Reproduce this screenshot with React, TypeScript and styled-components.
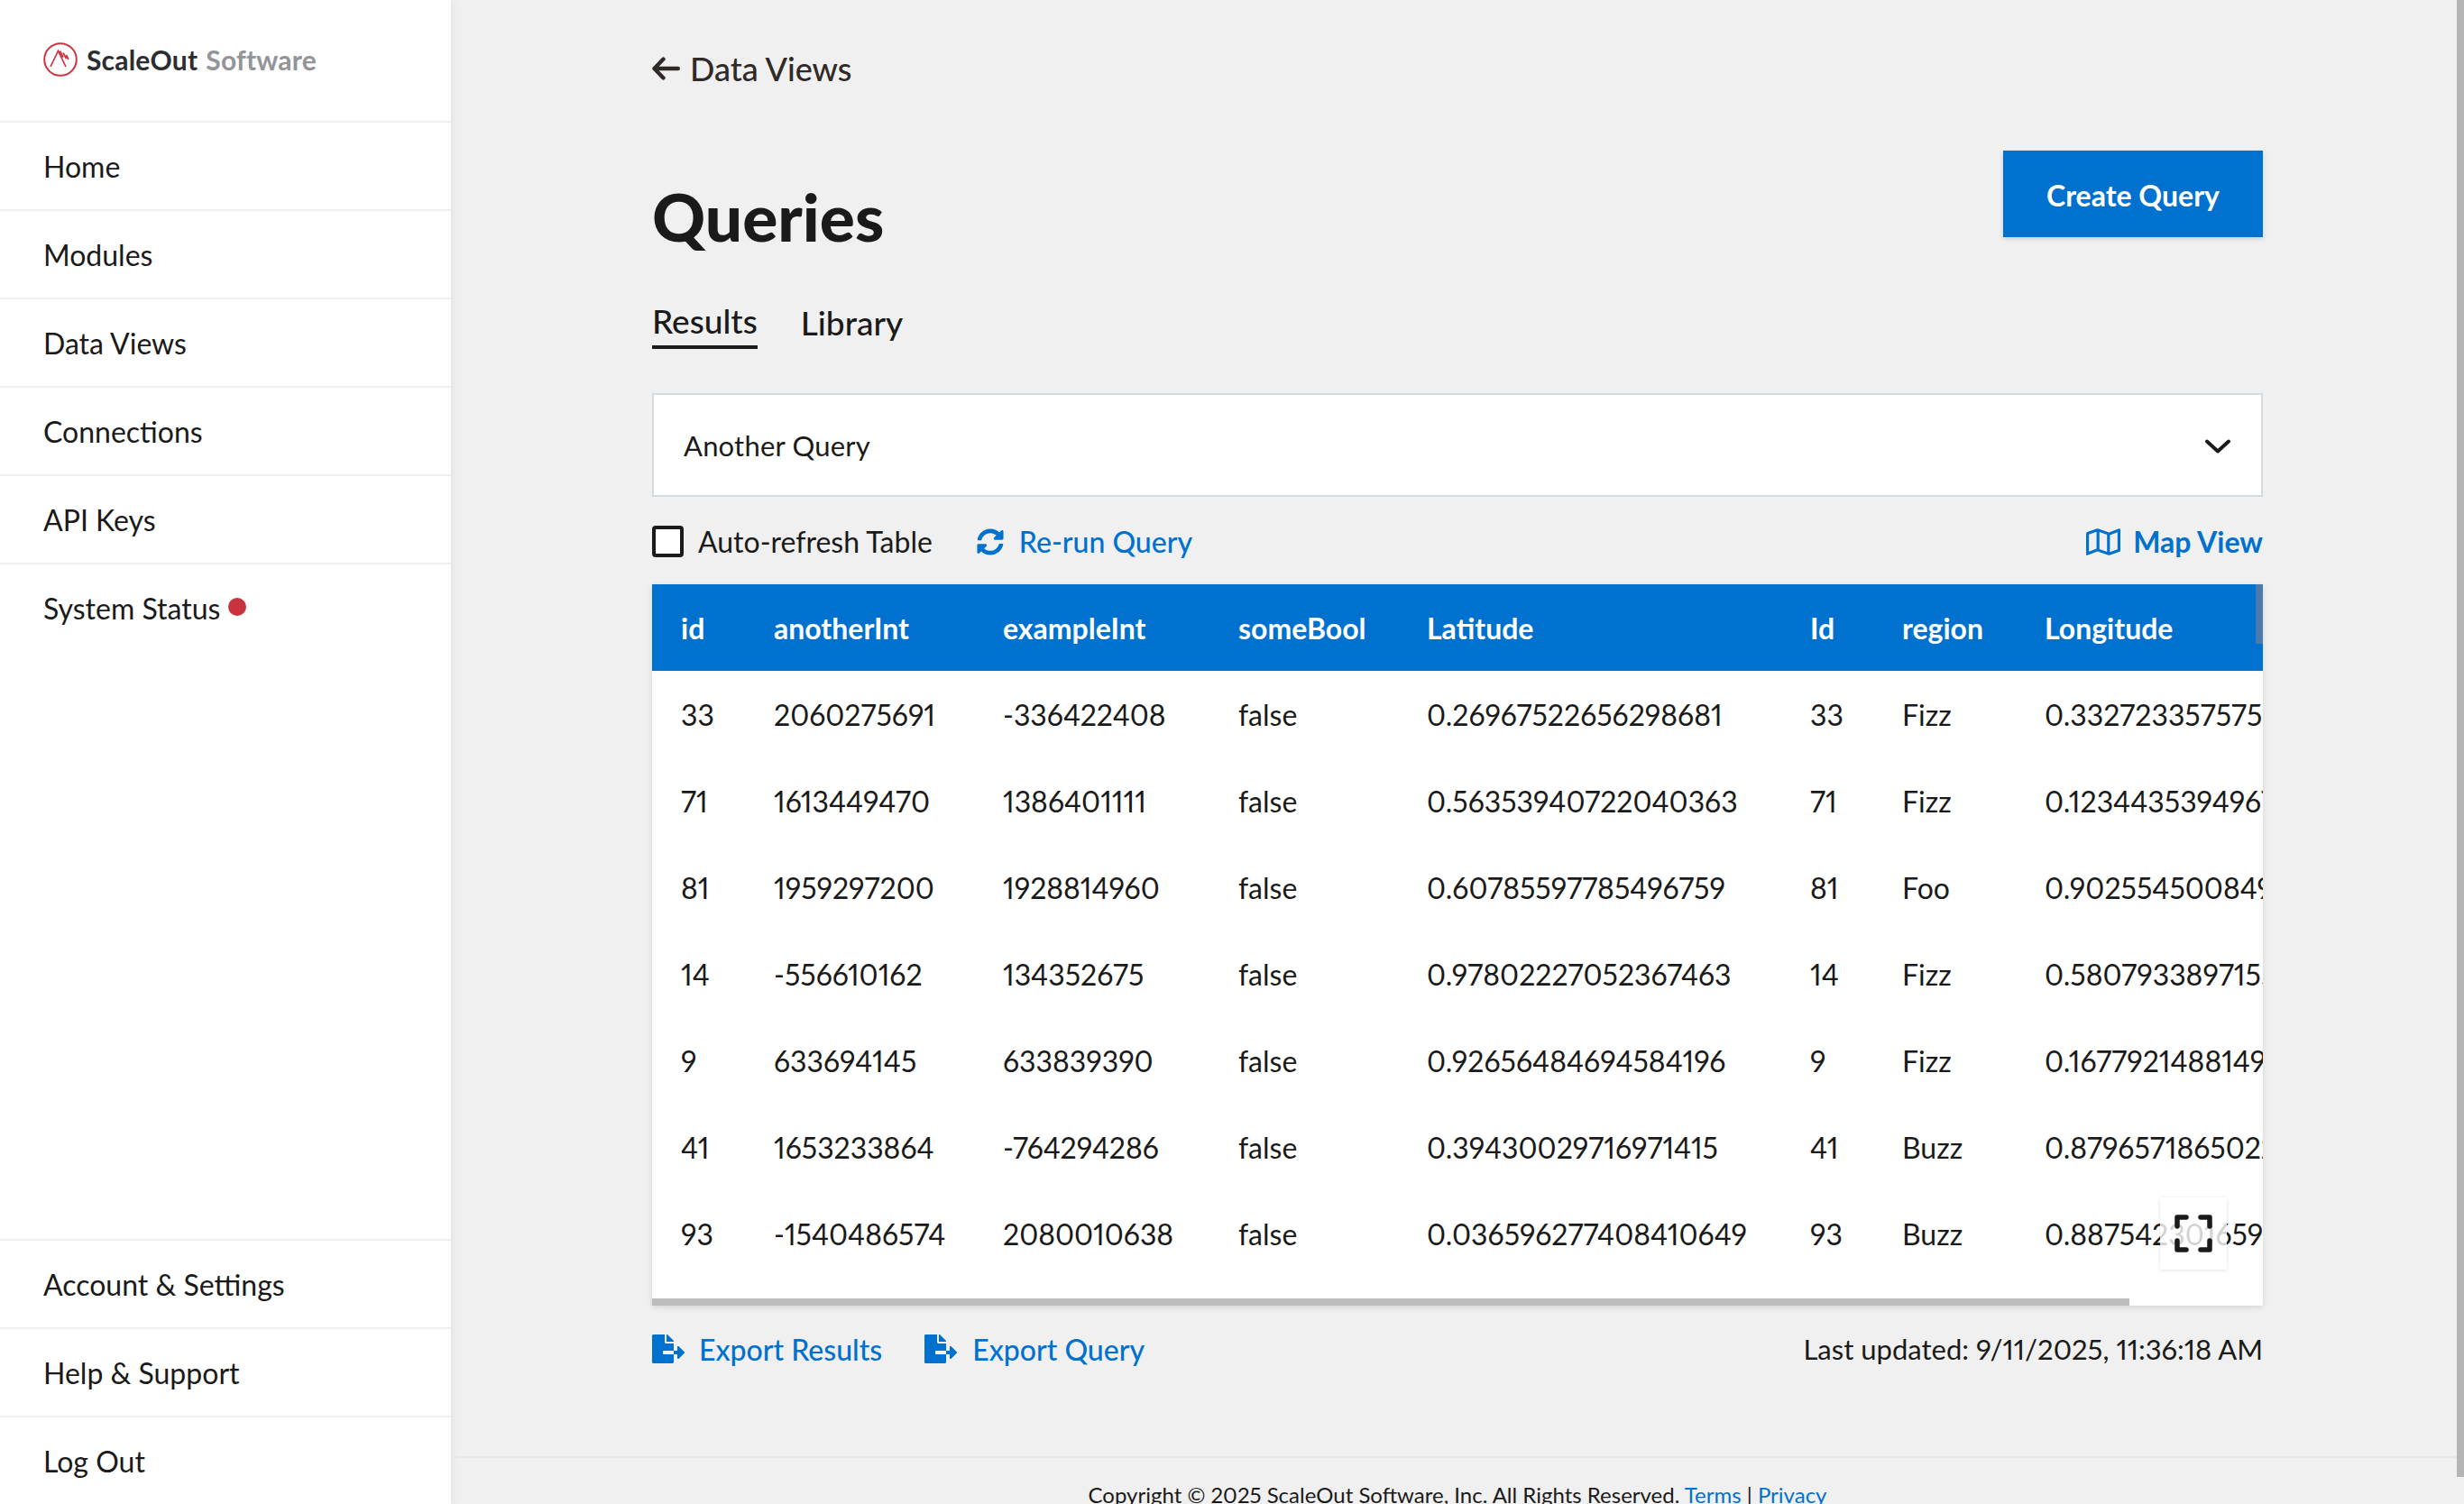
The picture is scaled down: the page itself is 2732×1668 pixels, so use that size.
import React from 'react';
import styled, { createGlobalStyle } from 'styled-components';
import { FaFileExport, FaRegMap, FaSyncAlt } from 'react-icons/fa';

const GlobalStyle = createGlobalStyle`
    html, body {
        margin: 0;
        padding: 0;
        height: 1668px;
        overflow: hidden;
        background: #f0f0f0;
        font-family: Lato, "Liberation Sans", sans-serif;
        font-variant-numeric: proportional-nums;
        color: #1a1a1a;
    }
    * { box-sizing: border-box; }
`;

const Shell = styled.div`
    display: flex;
    position: relative;
    height: 1668px;
    overflow: hidden;
`;

const Sidebar = styled.aside`
    width: 500px;
    flex: none;
    display: flex;
    flex-direction: column;
    justify-content: space-between;
    background: #fff;
    box-shadow: 2px 0 10px rgba(0, 0, 0, 0.06);
`;

const Brand = styled.div`
    height: 134px;
    display: flex;
    align-items: center;
    padding-left: 48px;
    padding-bottom: 2px;
    gap: 10px;
    font-size: 30px;
    font-weight: 700;
    letter-spacing: 0.2px;
    color: #2b2d30;
`;

const BrandLight = styled.span`
    color: #929497;
    margin-left: 9px;
`;

const NavList = styled.nav`
    display: flex;
    flex-direction: column;
`;

const NavItem = styled.a`
    height: 98px;
    display: flex;
    align-items: center;
    gap: 9px;
    padding-left: 48px;
    border-top: 2px solid #f0f0f0;
    font-size: 32px;
    color: #1a1a1a;
`;

const StatusDot = styled.span`
    width: 20px;
    height: 20px;
    border-radius: 50%;
    background: #c9323e;
    margin-bottom: 2px;
`;

const Main = styled.main`
    flex: 1;
    display: flex;
    flex-direction: column;
    min-width: 0;
`;

const Content = styled.div`
    padding: 0 223px;
`;

const BackLink = styled.a`
    height: 154px;
    display: flex;
    align-items: center;
    padding-bottom: 2px;
    gap: 11px;
    font-size: 36px;
    font-weight: 500;
    color: #2f2a27;
`;

const HeadRow = styled.div`
    display: flex;
    justify-content: space-between;
    align-items: flex-start;
    height: 147px;
    padding-top: 13px;
`;

const Title = styled.h1`
    margin: 31px 0 0;
    font-size: 73px;
    line-height: 84px;
    font-weight: 900;
    color: #1a1a1a;
`;

const CreateButton = styled.button`
    width: 288px;
    height: 96px;
    border: 0;
    padding-top: 4px;
    background: #0071ce;
    color: #fff;
    font-family: inherit;
    font-size: 32px;
    font-weight: 700;
    box-shadow: 0 2px 5px rgba(0, 0, 0, 0.15);
`;

const Tabs = styled.div`
    display: flex;
    gap: 48px;
    height: 135px;
`;

const Tab = styled.a<{ $active?: boolean }>`
    height: 86px;
    display: flex;
    align-items: flex-end;
    padding-bottom: ${(p) => (p.$active ? '5px' : '3px')};
    font-size: 37px;
    line-height: 44px;
    font-weight: 500;
    color: #1a1a1a;
    border-bottom: 4px solid ${(p) => (p.$active ? '#1a1a1a' : 'transparent')};
`;

const Select = styled.div`
    height: 115px;
    display: flex;
    align-items: center;
    justify-content: space-between;
    padding: 0 33px;
    background: #fff;
    border: 2px solid #d5dae0;
    font-size: 31px;
    letter-spacing: 0.2px;
`;

const ChevronWrap = styled.span`
    display: flex;
    margin: 2px 1px 0 0;
`;

const Toolbar = styled.div`
    height: 97px;
    display: flex;
    align-items: center;
    padding-top: 2px;
    font-size: 32px;
`;

const CheckBox = styled.span`
    width: 35px;
    height: 35px;
    border: 4px solid #1a1a1a;
    border-radius: 4px;
    background: #fff;
    margin-right: 16px;
`;

const ActionLink = styled.a<{ $gap: number; $left?: number; $strong?: boolean }>`
    display: inline-flex;
    align-items: center;
    gap: ${(p) => p.$gap}px;
    margin-left: ${(p) => p.$left ?? 0}px;
    color: #0071ce;
    font-size: 32px;
    font-weight: ${(p) => (p.$strong ? 700 : 500)};
`;

const Spacer = styled.span`
    flex: 1;
`;

const TableCard = styled.div`
    position: relative;
    height: 800px;
    background: #fff;
    overflow: hidden;
    box-shadow: 0 2px 6px rgba(0, 0, 0, 0.12);
`;

const DataTable = styled.table`
    width: 2160px;
    table-layout: fixed;
    border-collapse: collapse;
`;

const Column = styled.col<{ $w: number }>`
    width: ${(p) => p.$w}px;
`;

const HeadCell = styled.th`
    height: 96px;
    padding: 0 0 0 32px;
    background: #0071ce;
    color: #fff;
    text-align: left;
    font-size: 32px;
    font-weight: 700;
`;

const Cell = styled.td`
    height: 96px;
    padding: 0 0 0 32px;
    font-size: 32px;
    white-space: nowrap;
    overflow: hidden;
`;

const HeaderThumb = styled.span`
    position: absolute;
    top: 0;
    right: 0;
    width: 8px;
    height: 66px;
    background: #4a7bab;
`;

const HorizontalThumb = styled.span`
    position: absolute;
    left: 0;
    bottom: 0;
    width: 1638px;
    height: 8px;
    background: #bdbdbd;
`;

const FullscreenButton = styled.button`
    position: absolute;
    left: 1672px;
    top: 680px;
    width: 74px;
    height: 80px;
    padding: 0;
    border: 0;
    display: flex;
    align-items: center;
    justify-content: center;
    background: rgba(255, 255, 255, 0.8);
    box-shadow: 0 1px 4px rgba(0, 0, 0, 0.12);
`;

const FooterActions = styled.div`
    height: 167px;
    padding-bottom: 71px;
    display: flex;
    align-items: center;
`;

const Updated = styled.span`
    font-size: 31px;
    color: #1a1a1a;
`;

const Footer = styled.footer`
    border-top: 2px solid #e6e6ec;
    padding-top: 26px;
    text-align: center;
    font-size: 24px;
    line-height: 30px;
    white-space: nowrap;
`;

const FooterLink = styled.a`
    color: #0071ce;
`;

const PageScrollbar = styled.span`
    position: absolute;
    top: 0;
    right: 0;
    width: 8px;
    height: 1638px;
    background: #b5b5b5;
`;

const columns = [103, 254, 261, 209, 425, 102, 158, 648];
const headers = ['id', 'anotherInt', 'exampleInt', 'someBool', 'Latitude', 'Id', 'region', 'Longitude'];
const rows = [
    ['33', '2060275691', '-336422408', 'false', '0.26967522656298681', '33', 'Fizz', '0.33272335757560214'],
    ['71', '1613449470', '1386401111', 'false', '0.56353940722040363', '71', 'Fizz', '0.12344353949671032'],
    ['81', '1959297200', '1928814960', 'false', '0.60785597785496759', '81', 'Foo', '0.90255450084952110'],
    ['14', '-556610162', '134352675', 'false', '0.97802227052367463', '14', 'Fizz', '0.58079338971558120'],
    ['9', '633694145', '633839390', 'false', '0.92656484694584196', '9', 'Fizz', '0.16779214881499320'],
    ['41', '1653233864', '-764294286', 'false', '0.39430029716971415', '41', 'Buzz', '0.87965718650221430'],
    ['93', '-1540486574', '2080010638', 'false', '0.036596277408410649', '93', 'Buzz', '0.88754230165959120'],
];

const Logo = () => (
    <svg width="38" height="38" viewBox="0 0 38 38" fill="none" stroke="#cc3340">
        <circle cx="19" cy="19" r="17.8" strokeWidth="2" />
        <path d="M8 27 L16.5 9.5 L25 27 M18.5 9.5 L22 16.5 M22 11.5 L25.5 18 M25.5 14 L28 19" strokeWidth="1.7" />
    </svg>
);

const BackArrow = () => (
    <svg width="31" height="26" viewBox="0 0 31 26" fill="none" stroke="#2f2a27" strokeWidth="4.4" strokeLinecap="round" strokeLinejoin="round">
        <path d="M12.5 2.5 L2.5 13 L12.5 23.5 M2.5 13 H28.8" />
    </svg>
);

const Chevron = () => (
    <svg width="28" height="16" viewBox="0 0 28 16" fill="none" stroke="#1a1a1a" strokeWidth="4" strokeLinecap="round" strokeLinejoin="round">
        <path d="M2 2.5 L14 13.5 L26 2.5" />
    </svg>
);

const ExpandIcon = () => (
    <svg width="42" height="42" viewBox="0 0 42 42" fill="none" stroke="#1a1a1a" strokeWidth="5.5" strokeLinecap="round" strokeLinejoin="round">
        <path d="M13 3 H3 V13 M29 3 H39 V13 M13 39 H3 V29 M29 39 H39 V29" />
    </svg>
);

export default function App() {
    return (
        <Shell>
            <GlobalStyle />
            <Sidebar>
                <div>
                    <Brand>
                        <Logo />
                        <span>ScaleOut<BrandLight>Software</BrandLight></span>
                    </Brand>
                    <NavList>
                        <NavItem>Home</NavItem>
                        <NavItem>Modules</NavItem>
                        <NavItem>Data Views</NavItem>
                        <NavItem>Connections</NavItem>
                        <NavItem>API Keys</NavItem>
                        <NavItem>System Status<StatusDot /></NavItem>
                    </NavList>
                </div>
                <NavList>
                    <NavItem>Account &amp; Settings</NavItem>
                    <NavItem>Help &amp; Support</NavItem>
                    <NavItem>Log Out</NavItem>
                </NavList>
            </Sidebar>
            <Main>
                <Content>
                    <BackLink><BackArrow />Data Views</BackLink>
                    <HeadRow>
                        <Title>Queries</Title>
                        <CreateButton>Create Query</CreateButton>
                    </HeadRow>
                    <Tabs>
                        <Tab $active>Results</Tab>
                        <Tab>Library</Tab>
                    </Tabs>
                    <Select>Another Query<ChevronWrap><Chevron /></ChevronWrap></Select>
                    <Toolbar>
                        <CheckBox />
                        Auto-refresh Table
                        <ActionLink $gap={17} $left={49}><FaSyncAlt size={30} />Re-run Query</ActionLink>
                        <Spacer />
                        <ActionLink $gap={14} $strong><FaRegMap size={38} />Map View</ActionLink>
                    </Toolbar>
                    <TableCard>
                        <DataTable>
                            <colgroup>
                                {columns.map((w, i) => <Column key={i} $w={w} />)}
                            </colgroup>
                            <thead>
                                <tr>{headers.map((h) => <HeadCell key={h}>{h}</HeadCell>)}</tr>
                            </thead>
                            <tbody>
                                {rows.map((row) => (
                                    <tr key={row[0]}>
                                        {row.map((v, i) => <Cell key={i}>{v}</Cell>)}
                                    </tr>
                                ))}
                            </tbody>
                        </DataTable>
                        <HeaderThumb />
                        <HorizontalThumb />
                        <FullscreenButton><ExpandIcon /></FullscreenButton>
                    </TableCard>
                    <FooterActions>
                        <ActionLink $gap={16}><FaFileExport size={36} />Export Results</ActionLink>
                        <ActionLink $gap={17} $left={47}><FaFileExport size={36} />Export Query</ActionLink>
                        <Spacer />
                        <Updated>Last updated: 9/11/2025, 11:36:18 AM</Updated>
                    </FooterActions>
                </Content>
                <Footer>
                    Copyright © 2025 ScaleOut Software, Inc. All Rights Reserved. <FooterLink>Terms</FooterLink> | <FooterLink>Privacy</FooterLink>
                </Footer>
            </Main>
            <PageScrollbar />
        </Shell>
    );
}
